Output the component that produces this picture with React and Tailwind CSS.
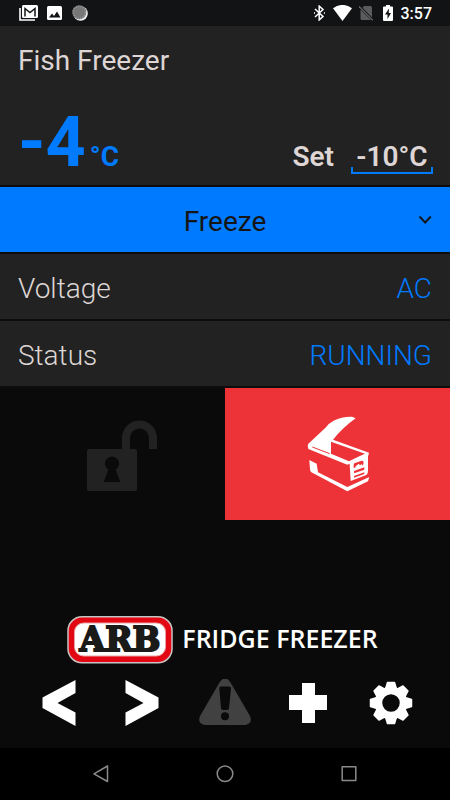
import { useState } from "react";

function StatusBar() {
  return (
    <header className="flex h-[26px] items-center justify-between bg-[#121315] pl-[19px] pr-[18px]">
      <div className="flex items-center">
        <svg className="mr-[9px] h-4 w-[19px]" viewBox="0 0 19 16" fill="none">
          <path d="M1 3v12h15" stroke="#fff" strokeWidth="1.6" />
          <rect x="3" y="0" width="16" height="13" rx="1.5" fill="#fff" />
          <path d="M6 11.5V3.5l5 4 5-4v8" stroke="#121315" strokeWidth="1.5" />
        </svg>
        <svg className="mr-[10px] h-4 w-[15px]" viewBox="0 0 15 16">
          <rect x="0" y="1" width="15" height="14" rx="1.5" fill="#fff" />
          <path d="M2 12.5l3-4 2 2.500 3-4.500 3.500 6z" fill="#121315" />
        </svg>
        <svg className="h-4 w-4" viewBox="0 0 16 16" fill="none">
          <circle cx="8.500" cy="8.500" r="7.300" fill="#eee" />
          <circle cx="7.300" cy="7.300" r="7" fill="#777" />
          <circle cx="7.300" cy="7.300" r="6" stroke="#999" strokeWidth="1.500" strokeDasharray="1 1.400" />
        </svg>
      </div>
      <div className="flex items-center text-white">
        <svg className="mr-2 h-4 w-[11px]" viewBox="0 0 11 16" fill="none" stroke="#fff" strokeWidth="1.500">
          <path d="M1 4l8 7.500-3.800 3.400V1.100L9 4.500 1 12" />
          <path d="M0.500 7.200v1.600M10.400 7.200v1.600" strokeWidth="1" />
        </svg>
        <svg className="mr-[7px] h-4 w-[19px]" viewBox="0 0 19 16">
          <path d="M0 3.300Q9.500-3.500 19 3.300L9.500 16z" fill="#fff" />
        </svg>
        <svg className="mr-[10px] h-4 w-[14px]" viewBox="0 0 14 16">
          <path d="M5 1h6.500q1.500 0 1.500 1.500v10L3.500 2.700zM1.500 4.500L12 15H3q-1.500 0-1.500-1.500z" fill="#5a5b5d" />
          <path d="M0 1.500L13.800 15.300" stroke="#6a6b6d" strokeWidth="1.200" />
        </svg>
        <svg className="mr-2 h-4 w-[10px]" viewBox="0 0 10 16">
          <path d="M3 0h4v1.500h2q1 0 1 1V15q0 1-1 1H1q-1 0-1-1V2.500q0-1 1-1h2z" fill="#fff" />
          <path d="M6 3.500L2 9.500h2.500V14L8 8H5.700z" fill="#121315" />
        </svg>
        <time className="pt-px text-base font-medium leading-5">3:57</time>
      </div>
    </header>
  );
}

function UnlockIcon() {
  return (
    <svg className="h-[132px] w-[225px]" viewBox="0 0 225 132" aria-hidden="true">
      <path
        fill="#222"
        fillRule="evenodd"
        d="M89 61h46q2 0 2 2v38q0 2-2 2H89q-2 0-2-2V63q0-2 2-2zM108.500 81.500L103.700 94h16.600L115.500 81.500a7 7 0 1 0-7 0z"
      />
      <path d="M126 61V50a13.500 13.500 0 0 1 27 0v11" fill="none" stroke="#222" strokeWidth="8" />
    </svg>
  );
}

function FridgeIcon() {
  return (
    <svg className="h-[110px] w-[110px]" viewBox="8 -3 330 330" aria-hidden="true">
      <path
        fill="#fff"
        d="M226 55L215 50Q185 49 160 62Q144 70 137 82L84 131Q80 137 84 147L201 194L208 191L211 243L256 226Q265 222 263 200V170L266 158L158 119Q188 82 226 55z"
      />
      <path fill="#ed3338" d="M152 125L254 161 237 169 206 184 152 161z" />
      <path d="M96 141L148 161" stroke="#ed3338" strokeWidth="3" />
      <path d="M220 194q0-4 4-5l20-7q6 0 6 7l-2 6-28 9zM221 213l31-11v7l-31 11zM221 228l31-11v5l-31 11z" fill="#ed3338" />
      <path d="M226 199l9-8 4 5 6-4v5l-19 7z" fill="#fff" />
      <path fill="#fff" d="M87 180L109 191 113 217 201 261 267 231 263 244 201 274 93 217Q89 214 89 207z" />
    </svg>
  );
}

function Brand() {
  return (
    <div className="flex items-start justify-center gap-[9px] pr-[5px]">
      <svg className="h-[48px] w-[106px] shrink-0" viewBox="0 0 106 48" role="img" aria-label="ARB">
        <rect x="1" y="0.750" width="104" height="46" rx="14" fill="#e30613" stroke="#c9c4c4" strokeWidth="1.500" />
        <rect x="7.500" y="7" width="91" height="33" rx="9" fill="#fff" stroke="#e9a5a5" strokeWidth="1" />
        <text
          x="53"
          y="35"
          textAnchor="middle"
          className="font-['DejaVu_Serif',serif] text-[33px] font-bold"
          fill="#1a1a18"
          stroke="#1a1a18"
          strokeWidth="2"
        >
          ARB
        </text>
      </svg>
      <span className="whitespace-nowrap font-['Open_Sans',sans-serif] text-[25px] font-semibold leading-[45px] text-white">
        FRIDGE FREEZER
      </span>
    </div>
  );
}

const teeth = [0, 45, 90, 135, 180, 225, 270, 315];

function Actions() {
  return (
    <nav className="grid grid-cols-5 px-[18px]" aria-label="Fridge actions">
      <button className="flex h-[78px] items-center justify-center" aria-label="Previous">
        <svg className="h-12 w-[52px]" viewBox="0 0 52 48" fill="#fff">
          <path d="M42.500 1v13L24.500 24l18 9.500V47L9.500 29V18.500z" />
        </svg>
      </button>
      <button className="flex h-[78px] items-center justify-center" aria-label="Next">
        <svg className="h-12 w-[52px]" viewBox="0 0 52 48" fill="#fff">
          <path d="M9.500 1v13L27.500 24l-18 9.500V47l33-18V18.500z" />
        </svg>
      </button>
      <button className="flex h-[78px] items-center justify-center" aria-label="Warnings">
        <svg className="h-12 w-[52px]" viewBox="0 0 52 48">
          <path
            d="M20.500 3.500Q26-5 31.500 3.500L51 37Q54 45 46 46H6Q-2 45 1 37z"
            fill="#414141"
          />
          <path d="M22 7.500h8q2 0 2 2L30 29q0 2-2 2h-4q-2 0-2-2L20.300 9.500q0-2 1.700-2z" fill="#0a0a0a" />
          <circle cx="26" cy="37.300" r="4" fill="#0a0a0a" />
        </svg>
      </button>
      <button className="flex h-[78px] items-center justify-center" aria-label="Add">
        <svg className="h-12 w-[52px]" viewBox="0 0 52 48" fill="#fff">
          <path d="M20 4h13v12h12v15h-12v13H20V31H7V16h13z" />
        </svg>
      </button>
      <button className="flex h-[78px] items-center justify-center" aria-label="Settings">
        <svg className="h-12 w-[52px]" viewBox="-26 -24 52 48">
          <g fill="#fff" stroke="#fff" strokeWidth="1.500" strokeLinejoin="round">
            {teeth.map((angle) => (
              <path key={angle} d="M-3.500-20.500h7l1.500 5 2 3h-14l2-3z" transform={`rotate(${angle})`} />
            ))}
          </g>
          <circle r="12.500" fill="none" stroke="#fff" strokeWidth="7.500" />
        </svg>
      </button>
    </nav>
  );
}

function SystemNav() {
  return (
    <footer className="grid h-[52px] grid-cols-3 bg-black px-[39px]">
      <button className="flex items-center justify-center" aria-label="Back">
        <svg className="h-5 w-5" viewBox="0 0 20 20" fill="none" stroke="#8a8a8a" strokeWidth="1.500" strokeLinejoin="round">
          <path d="M16.500 2v15.500L3 9.800z" />
        </svg>
      </button>
      <button className="flex items-center justify-center" aria-label="Home">
        <svg className="h-5 w-5" viewBox="0 0 20 20" fill="none" stroke="#8a8a8a" strokeWidth="1.500">
          <circle cx="10" cy="9.800" r="7.800" />
        </svg>
      </button>
      <button className="flex items-center justify-center" aria-label="Recent apps">
        <svg className="h-5 w-5" viewBox="0 0 20 20" fill="none" stroke="#8a8a8a" strokeWidth="1.500" strokeLinejoin="round">
          <rect x="3.200" y="2.800" width="13.600" height="13.800" />
        </svg>
      </button>
    </footer>
  );
}

function Row({ label, value }) {
  return (
    <div className="flex h-[67px] items-center justify-between border-b-2 border-[#0d0d0d] bg-[#222] px-[18px] pt-1 text-[28px] font-light leading-9">
      <dt className="text-[#ded6d5]">{label}</dt>
      <dd className="text-[#007aff]">{value}</dd>
    </div>
  );
}

export default function App() {
  const [target, setTarget] = useState("-10°C");
  const [mode, setMode] = useState("Freeze");
  return (
    <div className="flex min-h-screen flex-col bg-[#0a0a0a] font-[Roboto,sans-serif]">
      <StatusBar />
      <main className="flex flex-1 flex-col">
        <section className="flex h-[161px] flex-col justify-between border-b-2 border-[#0d0d0d] bg-[#222] pb-[7px] pl-[18px] pr-[17px] pt-[17px]">
          <h1 className="text-[28px] leading-9 text-[#ded6d5]">Fish Freezer</h1>
          <div className="flex items-baseline justify-between">
            <p className="flex items-baseline gap-1 font-bold text-[#007aff]">
              <span className="text-[70px] leading-[72px]">-4</span>
              <span className="text-[28px] leading-9">°C</span>
            </p>
            <div className="flex items-baseline gap-[17px] text-[28px] font-semibold leading-9 text-[#ded6d5]">
              <label htmlFor="target">Set</label>
              <span className="relative">
                <input
                  id="target"
                  className="h-9 w-[82px] bg-transparent text-center outline-none"
                  value={target}
                  onChange={(e) => setTarget(e.target.value)}
                />
                <span className="pointer-events-none absolute inset-x-0 bottom-px h-[7px] border-x-2 border-b-2 border-[#007aff]" />
              </span>
            </div>
          </div>
        </section>
        <div className="relative h-[67px] border-b-2 border-[#0d0d0d] bg-[#007aff]">
          <select
            aria-label="Mode"
            className="h-full w-full appearance-none pt-1 text-center text-[28px] text-[#151515] outline-none"
            value={mode}
            onChange={(e) => setMode(e.target.value)}
          >
            <option>Freeze</option>
            <option>Fridge</option>
          </select>
          <svg className="pointer-events-none absolute right-[18px] top-[27px] h-3 w-[14px]" viewBox="0 0 14 12" fill="none">
            <path d="M1.500 2.500L7.200 8.500l5.600-6" stroke="#101820" strokeWidth="2" />
          </svg>
        </div>
        <dl>
          <Row label="Voltage" value="AC" />
          <Row label="Status" value="RUNNING" />
        </dl>
        <div className="grid grid-cols-2">
          <button className="flex h-[132px] items-center justify-center" aria-label="Unlocked">
            <UnlockIcon />
          </button>
          <button className="flex h-[132px] items-center justify-center bg-[#ed3338]" aria-label="Fridge lid open">
            <FridgeIcon />
          </button>
        </div>
        <div className="mt-auto pb-[6px]">
          <Brand />
          <Actions />
        </div>
      </main>
      <SystemNav />
    </div>
  );
}
